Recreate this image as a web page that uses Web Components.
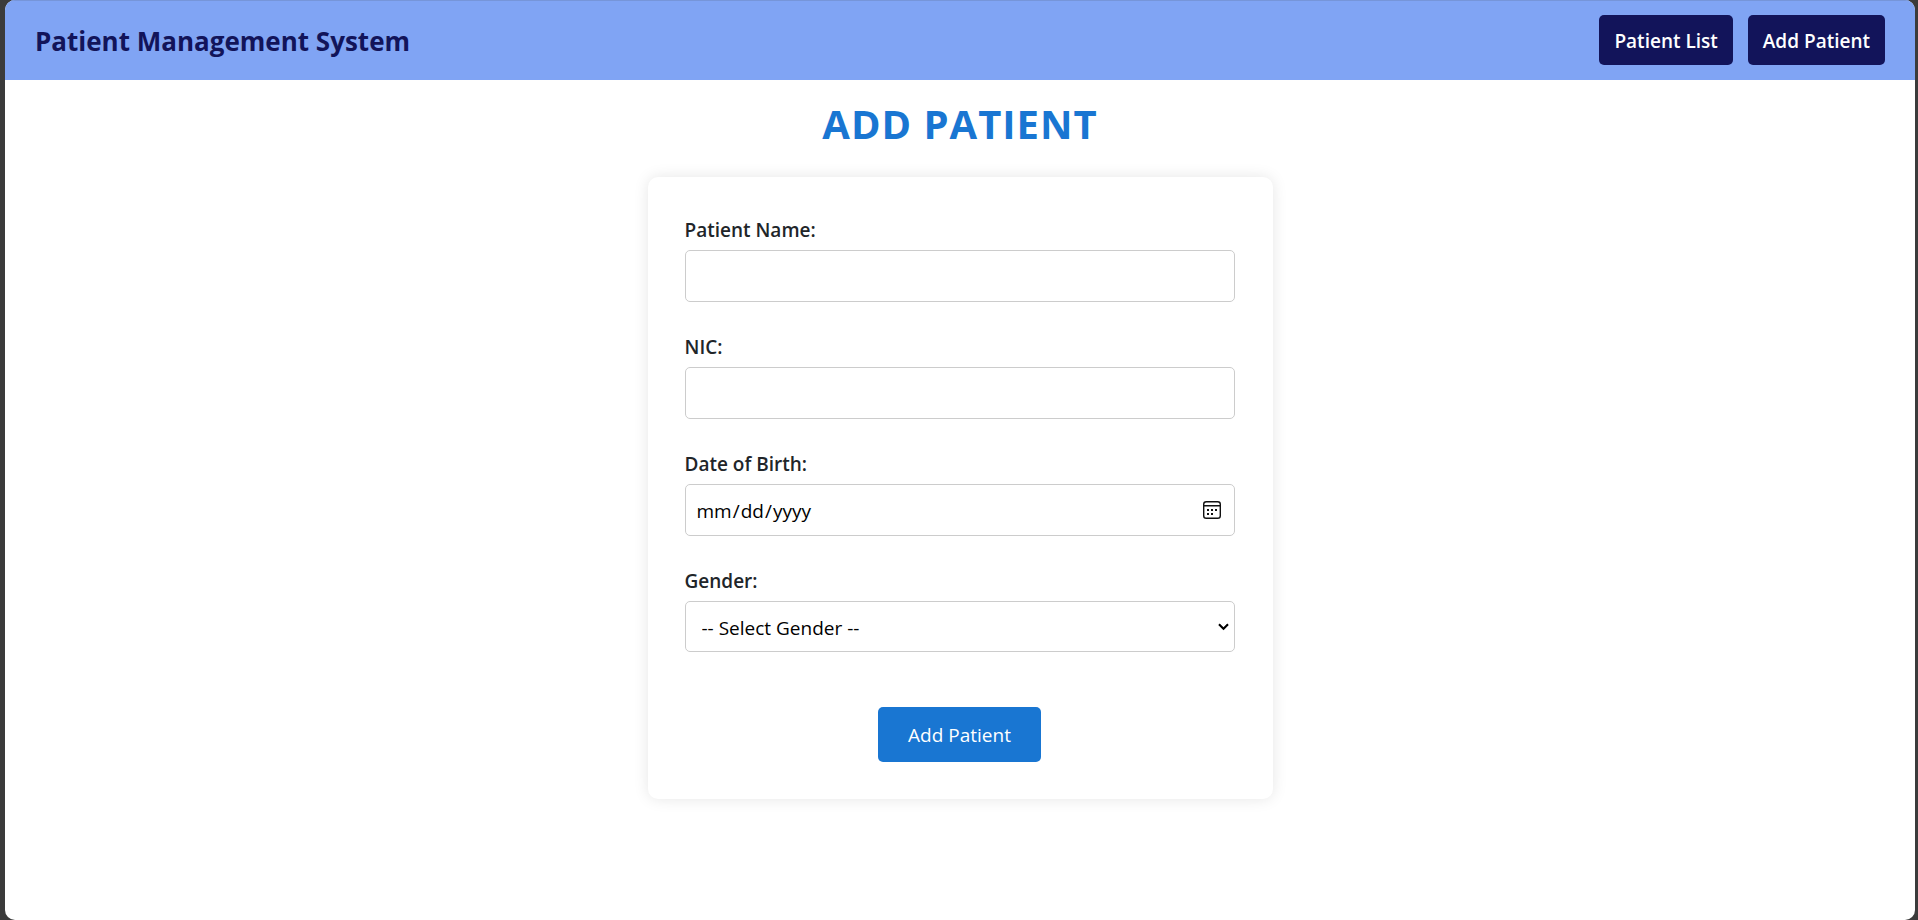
<!DOCTYPE html>
<html lang="en-US">
<head>
<meta charset="utf-8">
<title>Patient Management System</title>
<style>
  html { height: 100%; background: #3b3b3b; }
  body {
    box-sizing: border-box; min-height: 100%; margin: 0; padding: 0 3px 0 5px;
    display: flex; flex-direction: column;
    font-family: "Segoe UI", "Open Sans", sans-serif; font-size: 19px; line-height: 30px; color: #212529;
  }
</style>
</head>
<body>
<app-shell>
  <app-header slot="header" heading="Patient Management System">
    <nav-link href="#patients">Patient List</nav-link>
    <nav-link href="#add">Add Patient</nav-link>
  </app-header>
  <patient-form heading="ADD PATIENT"></patient-form>
</app-shell>

<script>
class BaseElement extends HTMLElement {
  constructor() {
    super();
    const template = document.createElement('template');
    template.innerHTML = this.constructor.markup;
    this.attachShadow({ mode: 'open' }).append(template.content.cloneNode(true));
  }
}

customElements.define('app-shell', class extends BaseElement {
  static markup = `
    <style>
      :host { flex: 1; display: flex; flex-direction: column; background: #fff; border-radius: 10px; overflow: hidden; }
      main { flex: 1; padding: 19px 20px; }
    </style>
    <slot name="header"></slot>
    <main><slot></slot></main>`;
});

customElements.define('app-header', class extends BaseElement {
  static markup = `
    <style>
      :host { display: block; }
      header {
        display: flex; flex-wrap: wrap; align-items: center; justify-content: space-between; gap: 15px;
        padding: 15px 30px; background: #80a4f4; box-shadow: inset 0 1px #7695d9;
      }
      h1 { margin: 0; padding-top: 2px; font-size: 26px; line-height: 36px; font-weight: 700; color: #12145a; }
      nav { display: flex; gap: 15px; }
    </style>
    <header><h1></h1><nav><slot></slot></nav></header>`;
  connectedCallback() {
    this.shadowRoot.querySelector('h1').textContent = this.getAttribute('heading');
  }
});

customElements.define('nav-link', class extends BaseElement {
  static markup = `
    <style>
      :host { display: block; }
      a { display: block; padding: 11px 15px 9px; border-radius: 5px; background: #12145a; color: #fff; font-weight: 600; text-decoration: none; }
    </style>
    <a><slot></slot></a>`;
  connectedCallback() {
    this.shadowRoot.querySelector('a').href = this.getAttribute('href');
  }
});

const controlStyles = `
  :host { display: block; }
  label { display: block; margin-bottom: 4px; font-weight: 600; line-height: 32px; }
  input, select {
    box-sizing: border-box; display: block; width: 100%; height: 52px; margin: 0; padding: 11px 10px 9px;
    border: 1px solid #ccc; border-radius: 5px; background: #fff; color: #000; font: inherit;
  }`;

customElements.define('text-field', class extends BaseElement {
  static markup = `
    <style>${controlStyles}
      ::-webkit-datetime-edit-fields-wrapper, ::-webkit-datetime-edit { padding: 0; }
      ::-webkit-calendar-picker-indicator {
        width: 20px; height: 20px; padding: 0; margin: 0 2px 2px 0;
        background: center / 20px no-repeat url("data:image/svg+xml,%3Csvg xmlns='http://www.w3.org/2000/svg' viewBox='0 0 20 20'%3E%3Crect x='1.7' y='1.7' width='16.6' height='16.6' rx='2.6' fill='none' stroke='%23111' stroke-width='1.4'/%3E%3Cpath d='M2 5.7h16' stroke='%23111' stroke-width='1.4'/%3E%3Cpath d='M5 9h2v2H5zM9 9h2v2H9zM13 9h2v2h-2zM5 13h2v2H5zM9 13h2v2H9z' fill='%23111'/%3E%3C/svg%3E");
      }
    </style>
    <label for="control"></label><input id="control">`;
  connectedCallback() {
    this.shadowRoot.querySelector('label').textContent = this.getAttribute('label');
    this.shadowRoot.querySelector('input').type = this.getAttribute('type') || 'text';
  }
});

customElements.define('gender-field', class extends BaseElement {
  static markup = `
    <style>${controlStyles}
      select {
        appearance: none; height: 51px; padding-left: 16px;
        background: #fff right 5px center / 11px 8px no-repeat url("data:image/svg+xml,%3Csvg xmlns='http://www.w3.org/2000/svg' viewBox='0 0 11 8'%3E%3Cpath d='M1 1.2l4.5 4.6L10 1.2' fill='none' stroke='%23000' stroke-width='2.1'/%3E%3C/svg%3E");
      }
    </style>
    <label for="control">Gender:</label>
    <select id="control">
      <option>-- Select Gender --</option><option>Male</option><option>Female</option>
    </select>`;
});

customElements.define('patient-form', class extends BaseElement {
  static markup = `
    <style>
      :host { display: block; }
      h2 { margin: 0 0 28px; text-align: center; color: #1976d2; font-size: 40px; line-height: 50px; font-weight: 700; letter-spacing: 1px; }
      form {
        box-sizing: border-box; max-width: 625px; margin: 0 auto; padding: 37px 38px 37px 37px;
        display: flex; flex-direction: column; gap: 29px;
        border-radius: 10px; background: #fff; box-shadow: 0 0 15px rgba(0, 0, 0, .1);
      }
      button {
        align-self: center; margin-top: 26px; padding: 13px 30px 12px; border: 0; border-radius: 5px;
        background: #1976d2; color: #fff; font: inherit;
      }
    </style>
    <h2></h2>
    <form>
      <text-field label="Patient Name:"></text-field>
      <text-field label="NIC:"></text-field>
      <text-field label="Date of Birth:" type="date"></text-field>
      <gender-field></gender-field>
      <button type="button">Add Patient</button>
    </form>`;
  connectedCallback() {
    this.shadowRoot.querySelector('h2').textContent = this.getAttribute('heading');
  }
});
</script>
</body>
</html>
